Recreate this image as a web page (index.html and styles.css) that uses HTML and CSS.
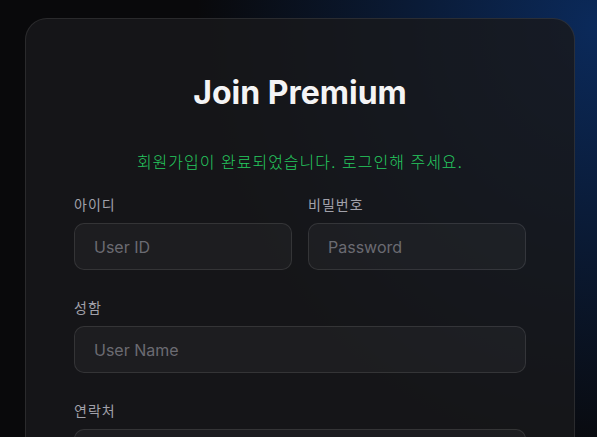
FILE: index.html
```html
<!DOCTYPE html>
<html lang="ko">
<head>
<meta charset="utf-8">
<title>Join Premium</title>
<link rel="stylesheet" href="styles.css">
</head>
<body>
<main class="page">
  <section class="card">
    <h1 class="title">Join Premium</h1>
    <p class="notice">회원가입이 완료되었습니다. 로그인해 주세요.</p>
    <form class="form">
      <div class="row">
        <label class="field">
          <span class="label">아이디</span>
          <input class="input" type="text" placeholder="User ID">
        </label>
        <label class="field">
          <span class="label">비밀번호</span>
          <input class="input" type="password" placeholder="Password">
        </label>
      </div>
      <label class="field">
        <span class="label">성함</span>
        <input class="input" type="text" placeholder="User Name">
      </label>
      <label class="field">
        <span class="label">연락처</span>
        <input class="input" type="text" placeholder="Phone">
      </label>
    </form>
  </section>
</main>
</body>
</html>
```
FILE: styles.css
```css
* { box-sizing: border-box; }
html, body { margin: 0; height: 100%; }
body {
  font-family: Inter, "Noto Sans CJK KR", sans-serif;
  background:
    radial-gradient(ellipse 400px 440px at 100% 6%, rgba(12, 62, 140, 0.62), rgba(12, 62, 140, 0) 100%),
    #09090b;
  color: #fafafa;
  overflow: hidden;
}
.page {
  display: flex;
  justify-content: center;
  padding: 18px 22px 0 25px;
}
.card {
  width: 550px;
  flex: none;
  border: 1px solid rgba(255, 255, 255, 0.09);
  border-radius: 22px;
  background: rgba(24, 24, 27, 0.82);
  padding: 55px 48px 48px;
  min-height: 600px;
}
.title {
  margin: 0;
  text-align: center;
  font-size: 32px;
  line-height: 38px;
  font-weight: 700;
  letter-spacing: 0;
  color: #f4f4f5;
}
.notice {
  margin: 39px 0 0;
  text-align: center;
  font-size: 16px;
  line-height: 22px;
  font-weight: 300;
  letter-spacing: 1px;
  color: #25c95f;
}
.form {
  margin-top: 22px;
  display: flex;
  flex-direction: column;
  gap: 28px;
}
.row {
  display: grid;
  grid-template-columns: 1fr 1fr;
  gap: 16px;
}
.field {
  display: flex;
  flex-direction: column;
  gap: 8px;
}
.label {
  font-size: 14px;
  line-height: 20px;
  letter-spacing: 1px;
  color: #a1a1aa;
}
.input {
  width: 100%;
  height: 47px;
  border: 1px solid rgba(255, 255, 255, 0.1);
  border-radius: 10px;
  background: rgba(255, 255, 255, 0.035);
  padding: 0 19px;
  font-family: Inter, "Noto Sans CJK KR", sans-serif;
  font-size: 16px;
  color: #fafafa;
  outline: none;
}
.input::placeholder { color: #6b6b72; }
```
